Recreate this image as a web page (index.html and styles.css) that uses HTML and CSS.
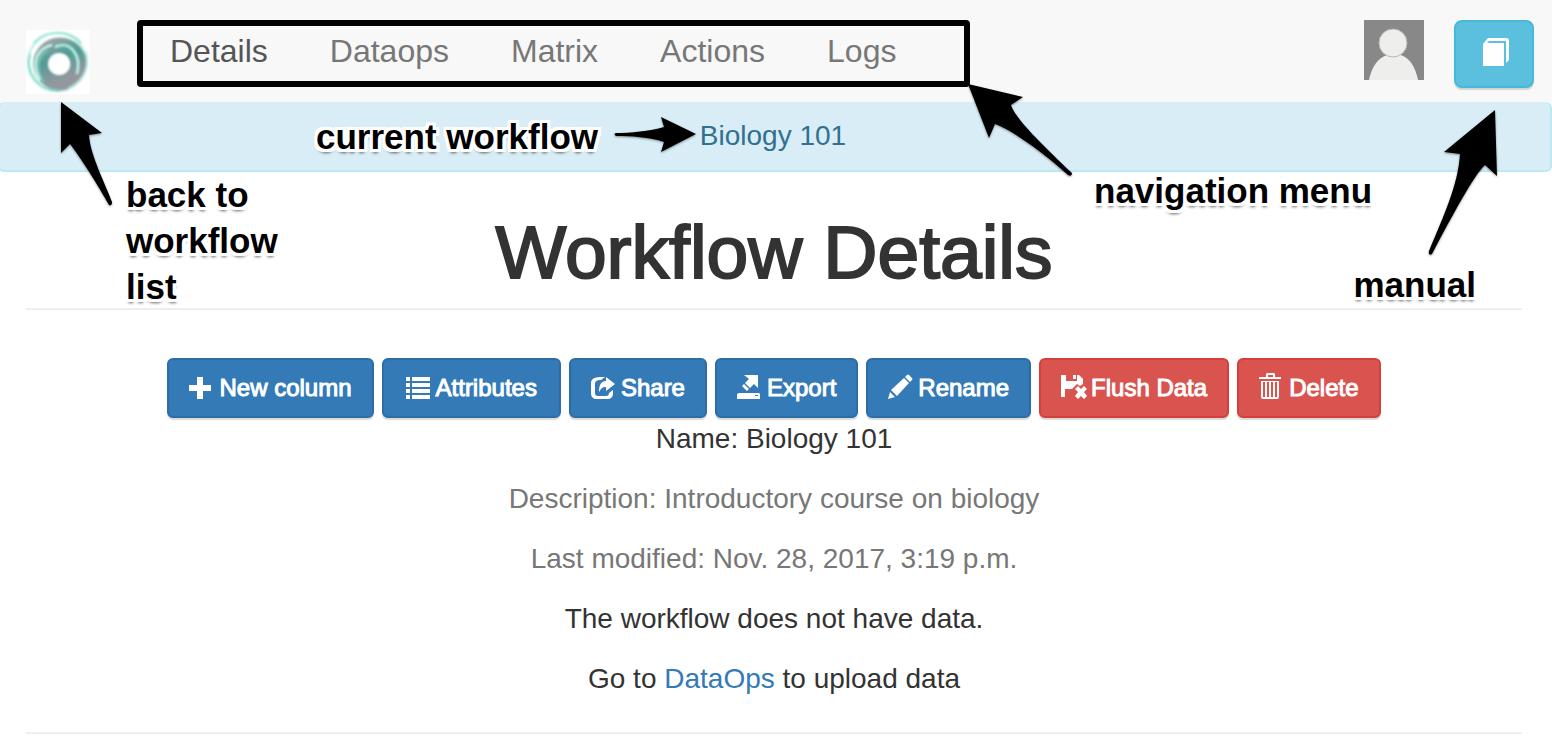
FILE: index.html
```html
<!DOCTYPE html>
<html lang="en">
<head>
<meta charset="utf-8">
<title>Workflow Details</title>
<link rel="stylesheet" href="styles.css">
</head>
<body>
<header class="navbar">
  <a class="brand" href="#" aria-label="Workflow list">
    <svg viewBox="0 0 64 64" width="64" height="64">
      <defs>
        <linearGradient id="ring" x1="0" y1="0" x2="0.4" y2="1">
          <stop offset="0" stop-color="#8fa3a3"/><stop offset="0.4" stop-color="#4f9d95"/><stop offset="1" stop-color="#93989f"/>
        </linearGradient>
        <filter id="soft"><feGaussianBlur stdDeviation="0.9"/></filter>
      </defs>
      <rect width="64" height="64" fill="#fff"/>
      <g fill="none" filter="url(#soft)">
        <circle cx="32" cy="33" r="25" fill="#c9dcdc"/>
        <circle cx="31" cy="32" r="29" stroke="#b9ece3" stroke-width="2"/>
        <circle cx="34" cy="34" r="18" stroke="url(#ring)" stroke-width="17"/>
        <path d="M8 13C18 1 42-2 55 13" stroke="#8fe3d3" stroke-width="2"/>
        <path d="M4 24C-1 43 12 61 34 61" stroke="#7fdccc" stroke-width="2"/>
        <path d="M14 50C4 32 12 18 26 15" stroke="#d9fff7" stroke-width="2"/>
        <path d="M18 52C8 38 12 26 22 20" stroke="#74cbbf" stroke-width="2"/>
        <path d="M29 17C44 10 56 25 51 44" stroke="#c4fff1" stroke-width="2"/>
        <path d="M60 22C64 40 56 52 42 59" stroke="#b4e9e0" stroke-width="2"/>
      </g>
      <circle cx="33" cy="34" r="11" fill="#fff" filter="url(#soft)"/>
    </svg>
  </a>
  <nav class="menu">
    <a class="menu-link active" href="#">Details</a>
    <a class="menu-link" href="#">Dataops</a>
    <a class="menu-link" href="#">Matrix</a>
    <a class="menu-link" href="#">Actions</a>
    <a class="menu-link" href="#">Logs</a>
  </nav>
  <div class="tools">
    <svg class="avatar" viewBox="0 0 60 60" width="60" height="60" role="img" aria-label="User">
      <rect width="60" height="60" fill="#888"/>
      <path d="M5 60C9 41 19 34 30 34S50 41 54 60Z" fill="#eeeeec"/>
      <circle cx="29" cy="23" r="14" fill="#eeeeec" stroke="#b8b8b6" stroke-width="1"/>
    </svg>
    <button class="btn btn-info" type="button" aria-label="Manual">
      <svg viewBox="-2 0 28 28" width="28" height="28">
        <path d="M1 28V6L6 0H24Q27 0 27 3V22L24 25V3H7L5 5H22V28Z"/>
      </svg>
    </button>
  </div>
</header>

<div class="alert">Biology 101</div>

<main class="page">
  <h1 class="title">Workflow Details</h1>
  <div class="actions">
    <button class="btn btn-primary" type="button">
      <svg viewBox="0 0 24 26" width="24" height="26"><path d="M8 4h6v8h8v6h-8v8H8v-8H0v-6h8z"/></svg>New column</button>
    <button class="btn btn-primary btn-wide" type="button">
      <svg viewBox="0 0 24 26" width="24" height="26"><path d="M0 4h4v4H0zM6 4h18v4H6zM0 10h4v4H0zM6 10h18v4H6zM0 16h4v4H0zM6 16h18v4H6zM0 22h4v4H0zM6 22h18v4H6z"/></svg>Attributes</button>
    <button class="btn btn-primary" type="button">
      <svg viewBox="0 0 24 26" width="24" height="26"><path d="M14 4C10 4 0 3 0 10v10c0 4 2 6 6 6h10c4 0 6-2 6-6v-3l-4 3c0 2-1 3-3 3H7c-2 0-3-1-3-3V11c0-3 2-4 6-4zM15 4l9 7-9 7v-4c-4 0-5 2-7 5 0-7 2-11 7-11z"/></svg>Share</button>
    <button class="btn btn-primary" type="button">
      <svg viewBox="0 0 24 26" width="24" height="26"><path fill-rule="evenodd" d="M7 2h14v13l-4-4-4 4-5-5 4-4zM7 11l5 5-2 2-5-5zM2 20h20l1 1v5H0v-5zM18 22v1h3v-1z"/></svg>Export</button>
    <button class="btn btn-primary" type="button">
      <svg viewBox="0 0 24 26" width="24" height="26"><path d="M0 26l2-7 5 5zM3 17L16 5l5 5L9 23zM17 4l2-2q1-1 2 0l3 3q1 1 0 2l-2 2z"/></svg>Rename</button>
    <button class="btn btn-danger" type="button">
      <svg viewBox="0 0 24 26" width="24" height="26"><path d="M0 2h5v6h11V2h2l4 4v5l-3 2-3-2-5 5H4v8H0zM12 2h3v4h-3zM14 16l3-3 3 3 3-3 3 3-3 3 3 4-3 3-3-3-3 3-3-3 3-4z"/></svg>Flush Data</button>
    <button class="btn btn-danger" type="button">
      <svg viewBox="0 0 24 26" width="24" height="26"><path fill-rule="evenodd" d="M7 1q0-1 2-1h5q2 0 2 1v3h6v2H0V4h7zM9 2v2h5V2zM2 8h18v16q0 2-2 2H4q-2 0-2-2zM4 9v15h2V9zM8 9v15h2V9zM12 9v15h2V9zM16 9v15h2V9z"/></svg>Delete</button>
  </div>
  <p class="line">Name: Biology 101</p>
  <p class="line muted">Description: Introductory course on biology</p>
  <p class="line muted">Last modified: Nov. 28, 2017, 3:19 p.m.</p>
  <p class="line">The workflow does not have data.</p>
  <p class="line">Go to <a class="link" href="#">DataOps</a> to upload data</p>
  <hr class="rule">
</main>

<div class="notes">
  <svg class="arrow arrow-back" viewBox="0 0 60 110" width="60" height="110"><path d="M1 2L42 33L29 35C30 55 46 85 52 102Q52 106 49 105C39 87 21 58 10 44L1 53Z"/></svg>
  <div class="note note-back">back to<br>workflow<br>list</div>
  <div class="note note-current">current workflow</div>
  <svg class="arrow arrow-current" viewBox="0 0 90 40" width="90" height="40"><path d="M6 18C20 18 40 16 54 12L51 2L86 19L51 37L54 27C40 22 20 21 6 21Q3 19 6 18Z"/></svg>
  <svg class="arrow arrow-menu" viewBox="0 0 110 96" width="110" height="96"><path d="M1 2L56 15L44 23C48 37 82 69 105 91Q105 95 101 93C82 75 44 47 28 42L22 56Z"/></svg>
  <div class="note note-menu">navigation menu</div>
  <svg class="arrow arrow-manual" viewBox="0 0 76 150" width="76" height="150"><path d="M66 2L68 68L56 57C45 67 22 110 3 146Q-1 148 0 143C14 109 29 78 31 46L15 44Z"/></svg>
  <div class="note note-manual">manual</div>
</div>
</body>
</html>
```
FILE: styles.css
```css
* { box-sizing: border-box; }

body {
  position: relative;
  margin: 0;
  background: #fff;
  color: #333;
  font: 28px/40px "Liberation Sans", Arial, sans-serif;
}

a { color: inherit; text-decoration: none; }

.navbar {
  display: flex;
  align-items: flex-start;
  height: 102px;
  padding: 20px 18px 0 26px;
  background: #f8f8f8;
}

.brand { margin: 10px 47px 0 0; }
.brand svg, .avatar { display: block; }

.menu {
  display: flex;
  gap: 62px;
  padding: 5px 68px 10px 27px;
  border: 6px solid #000;
  border-radius: 4px;
  color: #777;
  font-size: 32px;
}

.menu-link.active { color: #555; }

.tools {
  display: flex;
  gap: 30px;
  margin-left: auto;
}

.btn {
  display: inline-flex;
  align-items: center;
  gap: 6px;
  height: 60px;
  padding: 0 20px;
  border: 2px solid;
  border-radius: 6px;
  box-shadow: 0 2px 1px rgba(0, 0, 0, 0.15);
  color: #fff;
  font: 24px/36px "Liberation Sans", Arial, sans-serif;
  white-space: nowrap;
  -webkit-text-stroke: 1px #fff;
}

.btn svg {
  overflow: visible;
  margin-bottom: 4px;
  fill: currentColor;
}

.btn-wide { padding: 0 22px; }
.btn-primary { background: #337ab7; border-color: #2e6da4; }
.btn-danger { background: #d9534f; border-color: #d43f3a; }

.btn-info {
  justify-content: center;
  width: 80px;
  height: 68px;
  border-color: #46b8da;
  border-radius: 8px;
  background: #5bc0de;
}

.alert {
  margin-left: -2px;
  padding: 14px 4px 14px 0;
  border: 2px solid #bce8f1;
  border-top: 0;
  border-radius: 6px;
  background: #d9edf7;
  color: #31708f;
  text-align: center;
}

.page { padding: 40px 30px 0 26px; text-align: center; }

.title {
  margin: 0 0 48px;
  padding-bottom: 16px;
  border-bottom: 2px solid #eee;
  font-size: 75px;
  font-weight: 400;
  line-height: 80px;
  -webkit-text-stroke: 2px #333;
}

.actions {
  display: flex;
  flex-wrap: wrap;
  justify-content: center;
  gap: 8px;
  margin-bottom: 1px;
}

.line { margin: 0 0 20px; }
.muted { color: #777; }
.link { color: #337ab7; }

.rule {
  margin: 33px 0 0;
  border: 0;
  border-top: 2px solid #eee;
}

.notes {
  position: absolute;
  inset: 0;
  overflow: hidden;
  pointer-events: none;
}

.note {
  position: absolute;
  color: #000;
  font-size: 35px;
  font-weight: 700;
  line-height: 46px;
  white-space: nowrap;
  text-shadow:
    3px 0 #fff, -3px 0 #fff, 0 3px #fff, 0 -3px #fff,
    3px 3px #fff, -3px 3px #fff, 3px -3px #fff, -3px -3px #fff,
    0 4px 3px rgba(0, 0, 0, 0.6);
}

.arrow {
  position: absolute;
  overflow: visible;
  filter: drop-shadow(0 1px 1px rgba(0, 0, 0, 0.4));
}

.arrow-back { left: 60px; top: 100px; }
.note-back { left: 126px; top: 172px; }
.note-current { right: 954px; top: 114px; }
.arrow-current { left: 610px; top: 115px; }
.arrow-menu { left: 967px; top: 82px; }
.note-menu { left: 1094px; top: 168px; }
.arrow-manual { right: 47px; top: 108px; }
.note-manual { right: 76px; top: 262px; }
```
